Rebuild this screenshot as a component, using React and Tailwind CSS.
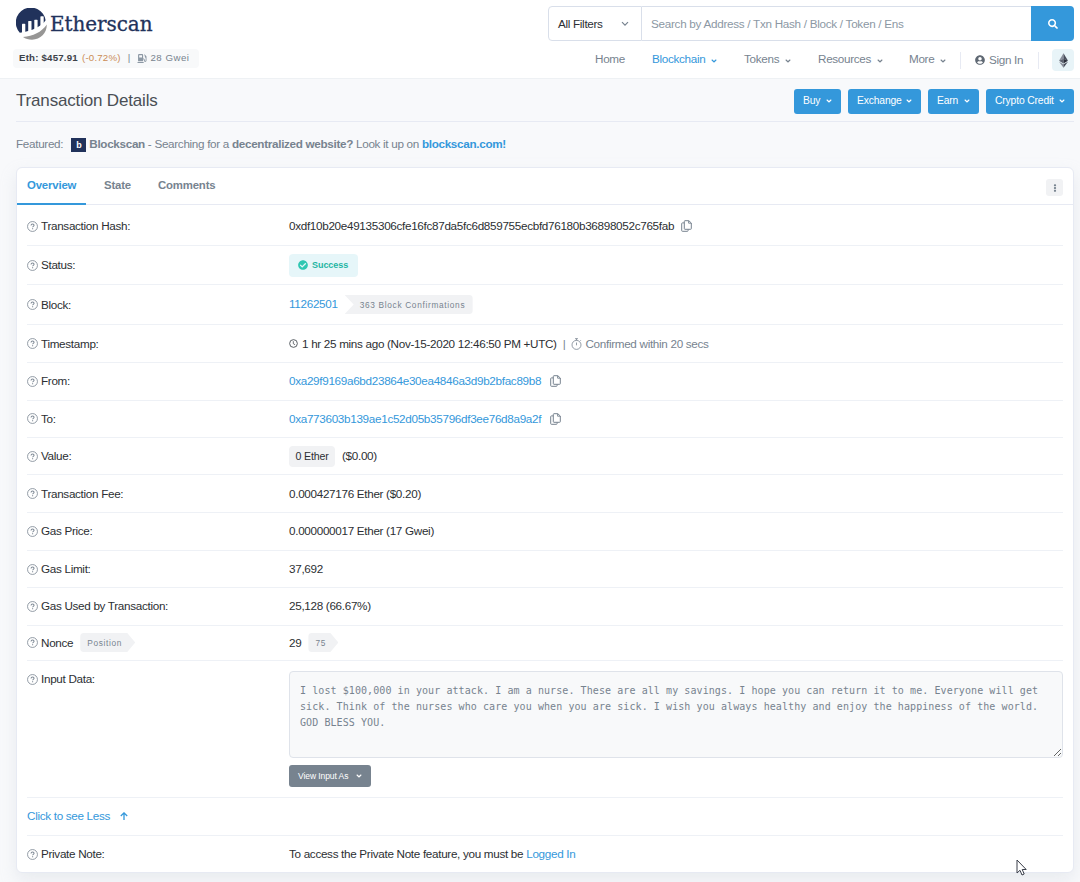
import React from "react";
import clsx from "clsx";
import { FaAngleDown, FaCheckCircle, FaEllipsisV, FaGasPump, FaSearch, FaUserCircle } from "react-icons/fa";

const INPUT_DATA =
  "I lost $100,000 in your attack. I am a nurse. These are all my savings. I hope you can return it to me. Everyone will get sick. Think of the nurses who care you when you are sick. I wish you always healthy and enjoy the happiness of the world. GOD BLESS YOU.";

const NAV_ITEMS = [
  { label: "Home", width: "w-[57px]" },
  { label: "Blockchain", width: "w-[92px]", menu: true, active: true },
  { label: "Tokens", width: "w-[74px]", menu: true },
  { label: "Resources", width: "w-[91px]", menu: true },
  { label: "More", width: "w-[51px]", menu: true }
];

const ACTIONS = [
  { label: "Buy", width: "w-[47px]" },
  { label: "Exchange", width: "w-[73px]" },
  { label: "Earn", width: "w-[51px]" },
  { label: "Crypto Credit", width: "w-[88px]" }
];

const HelpIcon = () => (
  <svg viewBox="0 0 12 12" className="w-[11px] h-[11px] shrink-0 text-[#7d8894]" fill="none" stroke="currentColor">
    <circle cx="6" cy="6" r="5.4" strokeWidth="0.9" />
    <path d="M4.4 4.9c0-1 .7-1.6 1.6-1.6s1.7.6 1.7 1.4c0 1.1-1.6 1.1-1.6 2.2" strokeWidth="1.1" />
    <path d="M6.1 7.9v1.1" strokeWidth="1.2" />
  </svg>
);

const CopyIcon = () => (
  <svg viewBox="0 0 11 12" className="w-[11px] h-[12px] shrink-0 text-[#77838f]" fill="none" stroke="currentColor">
    <path d="M4 .7h3.8L10.3 3v5.6a.7.7 0 0 1-.7.7H4a.7.7 0 0 1-.7-.7V1.4A.7.7 0 0 1 4 .7z" strokeWidth="1" />
    <path d="M7.6.8v2.4h2.6" strokeWidth="0.9" />
    <path d="M3.2 2.9H1.4a.7.7 0 0 0-.7.7v7a.7.7 0 0 0 .7.7h5a.7.7 0 0 0 .7-.7V9.4" strokeWidth="1" />
  </svg>
);

const ClockIcon = () => (
  <svg viewBox="0 0 10 10" className="w-[9px] h-[9px] shrink-0 text-[#4a4f55]" fill="none" stroke="currentColor">
    <circle cx="5" cy="5" r="4.3" strokeWidth="1" />
    <path d="M4.8 2.4v2.8l2 1.2" strokeWidth="0.9" />
  </svg>
);

const StopwatchIcon = () => (
  <svg viewBox="0 0 11 12" className="w-[11px] h-[12px] shrink-0 text-[#77838f]" fill="none" stroke="currentColor">
    <circle cx="5.5" cy="6.9" r="4.5" strokeWidth="0.8" />
    <path d="M4 .7h3M5.5.7v1.7M9 3.1l.8-.8M5.5 4.5v2.8" strokeWidth="0.8" />
  </svg>
);

const EthIcon = () => (
  <svg viewBox="0 0 10 16" className="w-[9px] h-[15px]">
    <path d="M5 0 0 8.2 5 6z" fill="#8a8f9c" />
    <path d="M5 0l5 8.2L5 6z" fill="#4a4e5c" />
    <path d="M0 8.2 5 6v5.2z" fill="#5d6270" />
    <path d="M10 8.2 5 6v5.2z" fill="#2b2e3a" />
    <path d="M0 9.3l5 3V16z" fill="#8a8f9c" />
    <path d="M10 9.3l-5 3V16z" fill="#4a4e5c" />
  </svg>
);

const Logo = () => (
  <div className="flex items-center h-[32px]">
    <svg viewBox="0 0 31 32" className="w-[31px] h-[32px] shrink-0">
      <path
        d="M3.8 24.8A15 15 0 1 1 29.600 12.200C26.500 17.500 17 22.800 3.800 24.800z"
        fill="#21325b"
      />
      <g fill="#fff">
        <rect x="6" y="15.800" width="3.300" height="10" rx="0.600" />
        <rect x="12.200" y="13" width="3.300" height="11.500" rx="0.600" />
        <rect x="18.300" y="11.800" width="3.300" height="11" rx="0.600" />
        <rect x="24.400" y="8.300" width="3.300" height="11" rx="0.600" />
      </g>
      <path d="M7 29C17 28.200 25.500 24.200 30.800 16.500 31 25 24.500 31.500 16 31.700 12.500 31.700 9.500 30.700 7 29z" fill="#979695" />
    </svg>
    <span className="ml-[3px] font-['DejaVu_Serif',serif] text-[20px] leading-none tracking-[-0.08px] text-[#21325b] [-webkit-text-stroke:0.3px_#21325b]">
      Etherscan
    </span>
  </div>
);

const SearchBar = () => (
  <div className="flex h-[35px] w-[526px]">
    <button className="flex w-[94px] items-center justify-between rounded-l border border-[#d9dfea] bg-white pl-[9px] pr-[12px] text-[#2c2f33]">
      All Filters
      <svg viewBox="0 0 8 6" className="w-[8px] h-[6px]" fill="none" stroke="#77838f" strokeWidth="1.2">
        <path d="M1 1.200l3 3 3-3" />
      </svg>
    </button>
    <input
      className="min-w-0 flex-1 border-y border-[#d9dfea] bg-white px-[9px] tracking-[-0.28px] placeholder:text-[#8c98a4] outline-none"
      placeholder="Search by Address / Txn Hash / Block / Token / Ens"
    />
    <button className="flex w-[43px] items-center justify-center rounded-r bg-[#3498db]">
      <FaSearch className="w-[10px] h-[10px] text-white" />
    </button>
  </div>
);

const Header = () => (
  <header className="flex h-[79px] justify-between border-b border-[#eef1f4] bg-white pl-[16px] pr-[6px]">
    <div className="pt-[8px]">
      <Logo />
      <div className="-ml-[3px] mt-[9px] flex h-[19px] w-[186px] items-center rounded bg-[#f8f9fa] pl-[6px] pb-px text-[9.7px] tracking-[0.2px]">
        <span className="font-bold text-[#3c4148]">Eth: $457.91</span>
        <span className="ml-[4px] text-[#cb8c55]">(-0.72%)</span>
        <span className="ml-[7px] text-[#77838f]">|</span>
        <FaGasPump className="ml-[7px] w-[10px] h-[9px] text-[#8c98a4]" />
        <span className="ml-[3px] tracking-[0.5px] text-[#77838f]">28 Gwei</span>
      </div>
    </div>

    <div className="pt-[6px]">
      <SearchBar />
      <nav className="mt-[8px] flex h-[22px] items-center justify-end text-[#77838f]">
        {NAV_ITEMS.map(item => (
          <a
            key={item.label}
            className={clsx("flex items-center pb-[2px]", item.width, item.active && "text-[#3498db]")}
          >
            {item.label}
            {item.menu && <FaAngleDown className="ml-[5px] mt-[3px] w-[8px] h-[8px]" />}
          </a>
        ))}
        <a className="flex h-[17px] w-[78px] items-center border-l border-[#e7eaf3] pl-[14px]">
          <FaUserCircle className="mr-[4px] w-[10px] h-[10px] text-[#5f6873]" />
          Sign In
        </a>
        <span className="h-[17px] w-[14px] border-l border-[#e7eaf3]" />
        <button className="flex h-[22px] w-[22px] items-center justify-center rounded bg-[#e8f4f8]">
          <EthIcon />
        </button>
      </nav>
    </div>
  </header>
);

const Row = ({ label, extra, height, children }) => (
  <div className={clsx("flex items-center border-b border-[#eef1f6]", height)}>
    <div className="flex w-[262px] shrink-0 items-center">
      <HelpIcon />
      <span className="ml-[3px]">{label}</span>
      {extra}
    </div>
    {children}
  </div>
);

const Ribbon = ({ className, children }) => (
  <span
    className={clsx(
      "flex h-[19px] items-center rounded-l bg-[#f1f2f4] text-[8.3px] tracking-[0.65px] text-[#77838f] [clip-path:polygon(0_0,calc(100%-8px)_0,100%_50%,calc(100%-8px)_100%,0_100%)]",
      className
    )}
  >
    {children}
  </span>
);

const AddressLink = ({ children }) => (
  <>
    <a className="mr-[9px] text-[#3498db]">{children}</a>
    <CopyIcon />
  </>
);

const Details = () => (
  <div className="px-[10px]">
    <Row label="Transaction Hash:" height="h-[41px] pt-[2px]">
      <span className="mr-[7px]">0xdf10b20e49135306cfe16fc87da5fc6d859755ecbfd76180b36898052c765fab</span>
      <CopyIcon />
    </Row>
    <Row label="Status:" height="h-[39px]">
      <span className="flex h-[23px] w-[69px] items-center rounded bg-[#e6f6f9] pl-[9px] text-[9px] font-bold tracking-[-0.05px] text-[#1fb5a3]">
        <FaCheckCircle className="mr-[4px] w-[10px] h-[10px] text-[#2fc7b2]" />
        Success
      </span>
    </Row>
    <Row label="Block:" height="h-[40px]">
      <a className="relative -top-px text-[#3498db]">11262501</a>
      <span className="ml-[7px] flex h-[19px] w-[128px] items-center rounded-r bg-[#f1f2f4] pl-[15px] text-[8.3px] tracking-[0.68px] text-[#77838f] [clip-path:polygon(0_0,100%_0,100%_100%,0_100%,9px_50%)]">
        363 Block Confirmations
      </span>
    </Row>
    <Row label="Timestamp:" height="h-[38px]">
      <ClockIcon />
      <span className="ml-[4px]">1 hr 25 mins ago (Nov-15-2020 12:46:50 PM +UTC)</span>
      <span className="mx-[6px] text-[#77838f]">|</span>
      <StopwatchIcon />
      <span className="ml-[3px] text-[#77838f]">Confirmed within 20 secs</span>
    </Row>
    <Row label="From:" height="h-[38px] pb-px">
      <AddressLink>0xa29f9169a6bd23864e30ea4846a3d9b2bfac89b8</AddressLink>
    </Row>
    <Row label="To:" height="h-[37px] pb-px">
      <AddressLink>0xa773603b139ae1c52d05b35796df3ee76d8a9a2f</AddressLink>
    </Row>
    <Row label="Value:" height="h-[37px]">
      <span className="flex h-[21px] w-[46px] items-center justify-center rounded bg-[#f1f2f4] text-[10.6px] tracking-[-0.15px]">
        0 Ether
      </span>
      <span className="ml-[7px]">($0.00)</span>
    </Row>
    <Row label="Transaction Fee:" height="h-[38px]">
      0.000427176 Ether ($0.20)
    </Row>
    <Row label="Gas Price:" height="h-[38px] pb-px">
      0.000000017 Ether (17 Gwei)
    </Row>
    <Row label="Gas Limit:" height="h-[37px]">
      37,692
    </Row>
    <Row label="Gas Used by Transaction:" height="h-[38px] pb-px">
      25,128 (66.67%)
    </Row>
    <Row
      label="Nonce"
      height="h-[35px] pb-px"
      extra={<Ribbon className="ml-[7px] w-[55px] pl-[7px]">Position</Ribbon>}
    >
      29
      <Ribbon className="ml-[7px] w-[30px] pl-[7px]">75</Ribbon>
    </Row>

    {/* Input data */}
    <div className="flex h-[137px] border-b border-[#eef1f6] pt-[10px]">
      <div className="flex h-[16px] w-[262px] shrink-0 items-center">
        <HelpIcon />
        <span className="ml-[3px]">Input Data:</span>
      </div>
      <div className="flex flex-1 flex-col items-start">
        <textarea
          readOnly
          spellCheck={false}
          className="block h-[87px] w-full resize rounded border border-[#dfe3ea] bg-[#f8f9fa] px-[10px] py-[11px] font-['DejaVu_Sans_Mono',monospace] text-[10px] leading-[16px] tracking-[0.08px] text-[#77838f] outline-none"
          defaultValue={INPUT_DATA}
        />
        <button className="mt-[7px] flex h-[22px] w-[82px] items-center rounded-[3px] bg-[#77838f] pl-[9px] text-[8.5px] tracking-[-0.08px] text-white">
          View Input As
          <FaAngleDown className="ml-[7px] w-[8px] h-[8px]" />
        </button>
      </div>
    </div>

    <div className="flex h-[38px] items-center border-b border-[#eef1f6] pb-px text-[#3498db]">
      Click to see Less
      <svg viewBox="0 0 8 8" className="ml-[10px] w-[8px] h-[8px]" fill="none" stroke="currentColor" strokeWidth="1.300">
        <path d="M4 8V1M.8 4 4 .9 7.200 4" />
      </svg>
    </div>
    <div className="flex h-[36px] items-center">
      <div className="flex w-[262px] shrink-0 items-center">
        <HelpIcon />
        <span className="ml-[3px]">Private Note:</span>
      </div>
      <span>
        To access the Private Note feature, you must be <a className="text-[#3498db]">Logged In</a>
      </span>
    </div>
  </div>
);

const App = () => (
  <div className="relative h-[882px] w-[1080px] overflow-hidden bg-[#f8f9fb] font-['Liberation_Sans',Arial,sans-serif] text-[11.7px] leading-[16px] tracking-[-0.31px] text-[#2c2f33]">
    <Header />

    <main className="pl-[16px] pr-[6px]">
      <div className="flex h-[43px] items-center justify-between border-b border-[#e7eaf3] pt-[2px]">
        <h1 className="text-[17px] tracking-[-0.17px] text-[#4a4f55]">Transaction Details</h1>
        <div className="flex gap-[7px]">
          {ACTIONS.map(action => (
            <button
              key={action.label}
              className={clsx(
                "flex h-[25px] items-center justify-between rounded-[3px] bg-[#3498db] pl-[9px] pr-[8px] text-[10.3px] tracking-[-0.14px] text-white",
                action.width
              )}
            >
              {action.label}
              <FaAngleDown className="w-[8px] h-[8px]" />
            </button>
          ))}
        </div>
      </div>

      <div className="flex h-[45px] items-center pb-[2px] text-[#77838f]">
        Featured:
        <span className="ml-[8px] mr-[3px] mt-[2px] flex h-[14px] w-[15px] items-center justify-center bg-[#21325b] text-[9px] font-bold text-white">
          b
        </span>
        <p>
          <b>Blockscan</b> - Searching for a <b>decentralized website?</b> Look it up on{" "}
          <b className="text-[#3498db]">blockscan.com!</b>
        </p>
      </div>

      <section className="h-[706px] rounded-md border border-[#e7eaf3] bg-white shadow-[0_7px_16px_rgba(189,197,209,0.25)]">
        <div className="flex h-[37px] items-stretch justify-between border-b border-[#e7eaf3] text-[11.400px] font-bold tracking-[-0.18px] text-[#77838f]">
          <div className="flex">
            <a className="-mb-px flex w-[69px] items-center border-b-2 border-[#3498db] pb-px pl-[10px] text-[#3498db]">
              Overview
            </a>
            <a className="flex w-[72px] items-center pb-[2px] pl-[18px]">State</a>
            <a className="flex items-center pb-[2px]">Comments</a>
          </div>
          <button className="mr-[10px] mt-[11px] flex h-[17px] w-[17px] items-center justify-center rounded-[3px] bg-[#f1f2f4]">
            <FaEllipsisV className="h-[8px] w-[8px]" />
          </button>
        </div>
        <Details />
      </section>
    </main>

    {/* Mouse pointer */}
    <svg viewBox="0 0 11 17" className="absolute left-[1016px] top-[859px] h-[17px] w-[11px]">
      <path d="M1 1v13l3-2.700 2 4.700 2.200-1-2-4.500h4z" fill="#fff" stroke="#3a3f4a" strokeWidth="1" />
    </svg>
  </div>
);

export default App;
